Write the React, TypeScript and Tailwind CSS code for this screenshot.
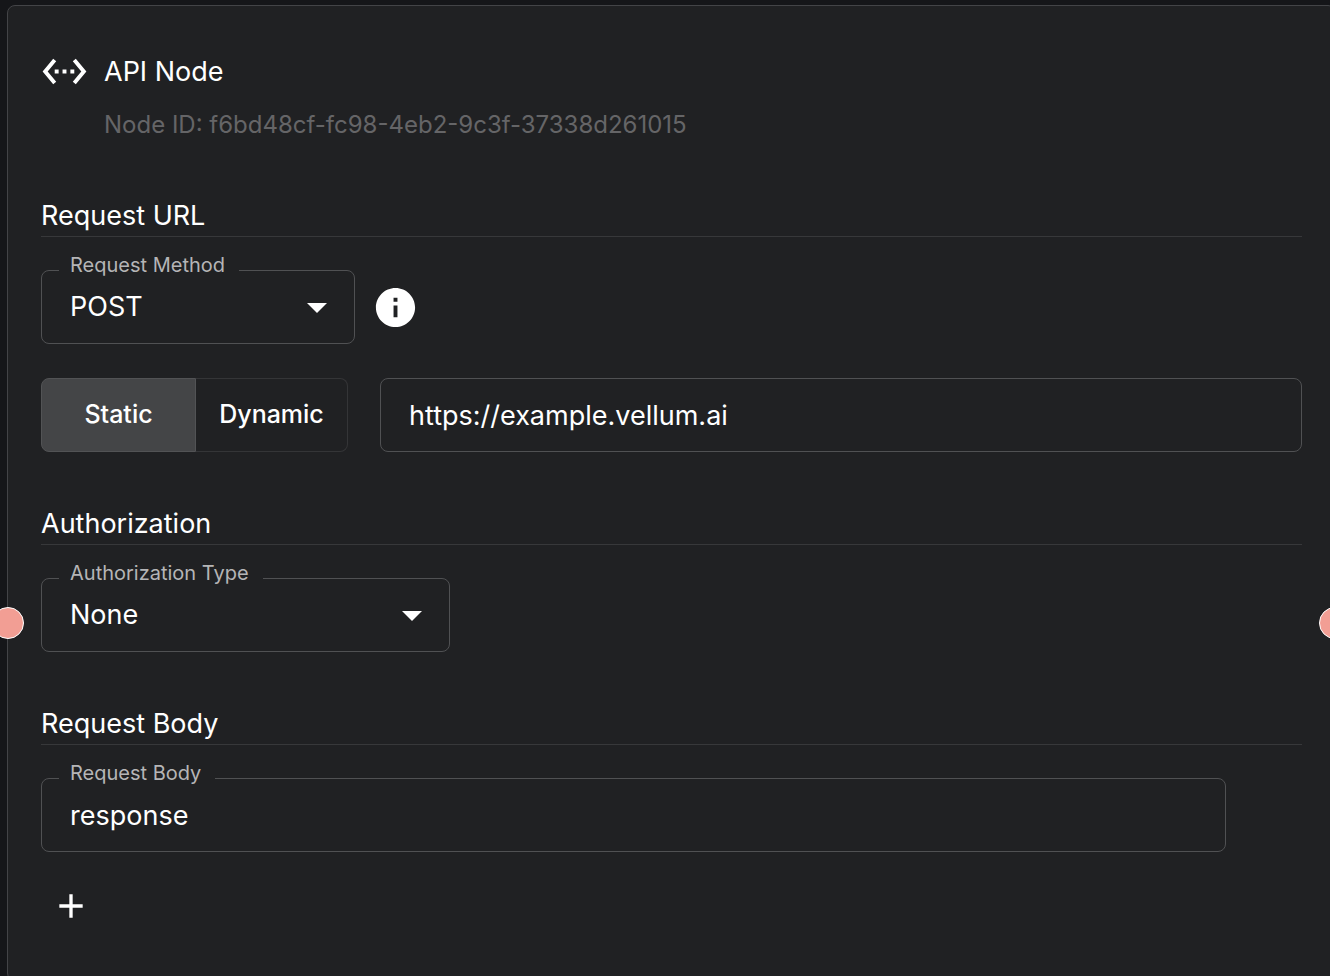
import { useState, type ReactNode } from 'react'
import clsx from 'clsx'

interface IconProps {
  d: string
  className?: string
}

function Icon({ d, className }: IconProps) {
  return (
    <svg viewBox="0 0 24 24" fill="currentColor" aria-hidden="true" className={clsx('shrink-0', className)}>
      <path d={d} />
    </svg>
  )
}

const ICONS = {
  api: 'M7.77 6.76 6.23 5.48.82 12l5.41 6.52 1.54-1.28L3.42 12l4.35-5.24zM7 13h2v-2H7v2zm10-2h-2v2h2v-2zm-6 2h2v-2h-2v2zm6.77-7.52-1.54 1.28L20.58 12l-4.35 5.24 1.54 1.28L23.18 12l-5.41-6.52z',
  info: 'M12 2C6.48 2 2 6.48 2 12s4.48 10 10 10 10-4.48 10-10S17.52 2 12 2zm1 15h-2v-6h2v6zm0-8h-2V7h2v2z',
  arrow: 'm7 10 5 5 5-5z',
  add: 'M19 13h-6v6h-2v-6H5v-2h6V5h2v6h6v2z',
}

interface SectionProps {
  title: string
  children: ReactNode
}

function Section({ title, children }: SectionProps) {
  return (
    <section>
      <h2 className="mb-[33px] border-b border-[#37383a] text-[27px] leading-10">{title}</h2>
      {children}
    </section>
  )
}

interface FieldProps {
  id: string
  label: string
  className?: string
  children: ReactNode
}

/** Outlined box whose label interrupts the top border */
function Field({ id, label, className, children }: FieldProps) {
  return (
    <div className={clsx('relative h-[74px] rounded-lg border border-[#505153]', className)}>
      <label
        htmlFor={id}
        className="absolute -top-5 left-[17px] bg-[#202123] pr-3.5 pl-[11px] text-xl leading-7 whitespace-nowrap text-[#b5b5b6]"
      >
        {label}
      </label>
      {children}
    </div>
  )
}

interface SelectProps {
  id: string
  options: string[]
}

function Select({ id, options }: SelectProps) {
  return (
    <>
      <select id={id} className="h-full w-full appearance-none rounded-lg bg-transparent pr-16 pl-7 text-[27px] outline-none">
        {options.map((option) => (
          <option key={option} className="bg-[#202123]">
            {option}
          </option>
        ))}
      </select>
      <Icon d={ICONS.arrow} className="pointer-events-none absolute top-3 right-[13px] size-12" />
    </>
  )
}

const HANDLE = 'absolute top-[601px] size-8 rounded-full border border-white bg-[#f29e94]'

export default function App() {
  const [mode, setMode] = useState('Static')
  const [url, setUrl] = useState('https://example.vellum.ai')
  const [body, setBody] = useState('response')

  return (
    <div className="flex h-screen overflow-hidden bg-[#151619] font-[Inter,sans-serif] text-white">
      <main className="relative mt-[5px] -mr-[6px] ml-[7px] flex min-h-screen flex-1 shrink-0 flex-col gap-[52px] rounded-lg border border-[#434447] bg-[#202123] px-[33px] pt-[50px]">
        <span className={clsx(HANDLE, '-left-4')} />
        <span className={clsx(HANDLE, '-right-4')} />

        <header className="mb-[3px] flex gap-4">
          <Icon d={ICONS.api} className="-my-2 size-[47px]" />
          <div className="min-w-0">
            <h1 className="text-[27px] leading-8">API Node</h1>
            <p className="mt-[21px] text-2xl leading-8 text-[#656567]">Node ID: f6bd48cf-fc98-4eb2-9c3f-37338d261015</p>
          </div>
        </header>

        <Section title="Request URL">
          <div className="flex items-center gap-[17px]">
            <Field id="method" label="Request Method" className="w-[314px]">
              <Select id="method" options={['POST', 'GET', 'PUT', 'PATCH', 'DELETE']} />
            </Field>
            <button type="button" aria-label="Request method info">
              <Icon d={ICONS.info} className="size-[47px]" />
            </button>
          </div>
          <div className="mt-[34px] flex items-center gap-8">
            <div className="flex h-[74px] shrink-0">
              {['Static', 'Dynamic'].map((item) => (
                <button
                  key={item}
                  type="button"
                  aria-pressed={mode === item}
                  onClick={() => setMode(item)}
                  className={clsx(
                    'border text-[25px] font-medium first:w-[155px] first:rounded-l-lg last:w-[152px] last:rounded-r-lg last:border-l-0',
                    mode === item ? 'border-[#525355] bg-[#444547]' : 'border-[#343537]',
                  )}
                >
                  {item}
                </button>
              ))}
            </div>
            <input
              aria-label="URL"
              value={url}
              onChange={(e) => setUrl(e.target.value)}
              className="h-[74px] min-w-0 flex-1 rounded-lg border border-[#505153] px-7 text-[27px] outline-none"
            />
          </div>
        </Section>

        <Section title="Authorization">
          <Field id="auth" label="Authorization Type" className="w-[409px]">
            <Select id="auth" options={['None', 'Bearer Token', 'API Key']} />
          </Field>
        </Section>

        <Section title="Request Body">
          <Field id="body" label="Request Body" className="mr-[76px]">
            <input
              id="body"
              value={body}
              onChange={(e) => setBody(e.target.value)}
              className="h-full w-full rounded-lg px-7 text-[27px] outline-none"
            />
          </Field>
          <button type="button" aria-label="Add" className="mt-[34px] ml-[10px] block">
            <Icon d={ICONS.add} className="size-10" />
          </button>
        </Section>
      </main>
    </div>
  )
}
